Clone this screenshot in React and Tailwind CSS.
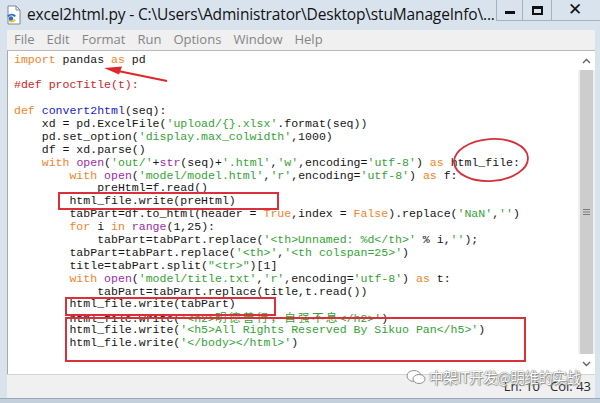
import React from 'react';

const K = 'text-[#f2832a]';
const B = 'text-[#9b2ba8]';
const S = 'text-[#35a335]';
const M = 'text-[#cc2222]';
const D = 'text-[#2020d8]';

const t = (cls, text) => ({ cls, text });

const lines = [
  [t(K, 'import'), ' pandas ', t(K, 'as'), ' pd'],
  [],
  [t(M, '#def procTitle(t):')],
  [],
  [t(K, 'def'), ' ', t(D, 'convert2html'), '(seq):'],
  ['    xd = pd.ExcelFile(', t(S, "'upload/{}.xlsx'"), '.format(seq))'],
  ['    pd.set_option(', t(S, "'display.max_colwidth'"), ',1000)'],
  ['    df = xd.parse()'],
  ['    ', t(K, 'with'), ' ', t(B, 'open'), '(', t(S, "'out/'"), '+', t(B, 'str'), '(seq)+', t(S, "'.html'"), ',', t(S, "'w'"), ',encoding=', t(S, "'utf-8'"), ') ', t(K, 'as'), ' html_file:'],
  ['        ', t(K, 'with'), ' ', t(B, 'open'), '(', t(S, "'model/model.html'"), ',', t(S, "'r'"), ',encoding=', t(S, "'utf-8'"), ') ', t(K, 'as'), ' f:'],
  ['            preHtml=f.read()'],
  ['        html_file.write(preHtml)'],
  ['        tabPart=df.to_html(header = ', t(K, 'True'), ',index = ', t(K, 'False'), ').replace(', t(S, "'NaN'"), ',', t(S, "''"), ')'],
  ['        ', t(K, 'for'), ' i ', t(K, 'in'), ' ', t(B, 'range'), '(1,25):'],
  ['            tabPart=tabPart.replace(', t(S, "'<th>Unnamed: %d</th>'"), ' % i,', t(S, "''"), ');'],
  ['        tabPart=tabPart.replace(', t(S, "'<th>'"), ',', t(S, "'<th colspan=25>'"), ')'],
  ['        title=tabPart.split(', t(S, '"<tr>"'), ')[1]'],
  ['        ', t(K, 'with'), ' ', t(B, 'open'), '(', t(S, "'model/title.txt'"), ',', t(S, "'r'"), ',encoding=', t(S, "'utf-8'"), ') ', t(K, 'as'), ' t:'],
  ['            tabPart=tabPart.replace(title,t.read())'],
  ['        html_file.write(tabPart)'],
  ['        html_file.write(', t(S, "'<h2>"), t(S + ' cjk', '明德善行，自强不息'), t(S, "</h2>'"), ')'],
  ['        html_file.write(', t(S, "'<h5>All Rights Reserved By Sikuo Pan</h5>'"), ')'],
  ['        html_file.write(', t(S, "'</body></html>'"), ')'],
];

function CodeLine({ parts }) {
  return (
    <div className="h-[12.9px] leading-[12.9px] whitespace-pre">
      {parts.length === 0 && ' '}
      {parts.map((p, i) =>
        typeof p === 'string' ? (
          <span key={i}>{p}</span>
        ) : p.cls.includes('cjk') ? (
          <span key={i} className={`${p.cls.replace(' cjk', '')} text-[11.6px] tracking-[2.26px] font-['Noto_Sans_CJK_SC',sans-serif]`}>
            {p.text}
          </span>
        ) : (
          <span key={i} className={p.cls}>{p.text}</span>
        )
      )}
    </div>
  );
}

function FileIcon() {
  return (
    <svg width="18" height="20" viewBox="0 0 18 20">
      <path d="M3 1h8l4 4v14H3z" fill="#fff" stroke="#7a8794" strokeWidth="1" />
      <path d="M11 1v4h4" fill="none" stroke="#7a8794" strokeWidth="1" />
      <path d="M2 11c3-3 7-3 9 0l-2 1c-1-2-4-2-5 0z" fill="#2f6fc0" />
      <path d="M3 16c2 2 6 2 8-1l-2-1c-1 2-3 2-5 1z" fill="#f2c230" />
      <circle cx="6" cy="13.5" r="2.2" fill="#2f6fc0" />
    </svg>
  );
}

export default function App() {
  return (
    <div className="relative w-[600px] h-[403px] overflow-hidden bg-[#d9e3ed] flex flex-col font-['Open_Sans',sans-serif]">
      {/* Title bar */}
      <div className="h-[30px] flex items-start shrink-0">
        <div className="pl-[5px] pt-[5px]">
          <FileIcon />
        </div>
        <div className="ml-[4px] pt-[3px] text-[15.5px] text-[#111] tracking-[-0.15px] whitespace-nowrap">
          excel2html.py - C:\Users\Administrator\Desktop\stuManageInfo\...
        </div>
        <div className="ml-auto flex h-[21px]">
          <div className="w-[27px] border-x border-b border-[#a7b2bd] flex items-center justify-center">
            <div className="w-[10px] h-[3px] bg-[#111] mt-[4px]" />
          </div>
          <div className="w-[29px] border-r border-b border-[#a7b2bd] flex items-center justify-center">
            <div className="w-[11px] h-[9px] border-2 border-t-[3px] border-[#111]" />
          </div>
          <div className="w-[48px] border-b border-[#a7b2bd] flex items-center justify-center text-[17px] font-bold text-[#111] pr-[2px] font-['DejaVu_Sans',sans-serif]">
            ✕
          </div>
        </div>
      </div>

      {/* Window body */}
      <div className="flex-1 flex flex-col pl-[7px] pr-[5px]">
        {/* Menu */}
        <div className="h-[21px] bg-[#f0f0f0] border-b border-[#b9b9b9] flex items-center gap-[12px] pl-[7px] text-[13px] text-[#858585] shrink-0">
          <span>File</span>
          <span>Edit</span>
          <span>Format</span>
          <span>Run</span>
          <span>Options</span>
          <span>Window</span>
          <span>Help</span>
        </div>

        {/* Editor */}
        <div className="flex-1 flex border-l border-[#a9a9a9] bg-white">
          <div className="flex-1 pl-[6px] pt-[2.5px] text-[11.55px] text-[#151515] font-['Liberation_Mono',monospace]">
            {lines.map((l, i) => (
              <CodeLine key={i} parts={l} />
            ))}
          </div>
          <div className="w-[17px] flex flex-col bg-[#f0f0f0]">
            <div className="h-[19px] bg-white flex items-center justify-center">
              <svg width="9" height="6" viewBox="0 0 9 6">
                <path d="M1 5l3.5-3.5L8 5" fill="none" stroke="#606060" strokeWidth="1.3" />
              </svg>
            </div>
            <div className="flex-1 mx-[2px] bg-[#cdcdcd] flex items-center justify-center">
              <svg width="9" height="8" viewBox="0 0 9 8">
                <path d="M1 1.5h7M1 4h7M1 6.5h7" stroke="#7c7c7c" strokeWidth="1" />
              </svg>
            </div>
            <div className="h-[20px] bg-white flex items-center justify-center">
              <svg width="9" height="6" viewBox="0 0 9 6">
                <path d="M1 1l3.5 3.5L8 1" fill="none" stroke="#606060" strokeWidth="1.3" />
              </svg>
            </div>
          </div>
        </div>

        {/* Status bar */}
        <div className="h-[24px] bg-[#f0f0f0] border-t border-[#d4d4d4] flex items-center justify-end pr-[4px] text-[13px] text-[#2a2a2a] shrink-0">
          <span>Ln: 10</span>
          <span className="ml-[10px]">Col: 43</span>
        </div>
      </div>
      <div className="h-[5px] bg-[#c3d0dc] border-t border-[#9aa9b7] shrink-0" />

      {/* Annotations */}
      <svg className="absolute left-0 top-0 pointer-events-none" width="600" height="403" viewBox="0 0 600 403">
        <path d="M167 81 L118 71" stroke="#e0262b" strokeWidth="2.2" fill="none" />
        <path d="M104 68 L122 66.5 L119 74.5 Z" fill="#e0262b" />
        <ellipse cx="491" cy="160" rx="37" ry="21" fill="none" stroke="#d4323a" strokeWidth="1.8" transform="rotate(-4 491 160)" />
        <rect x="59" y="193" width="219" height="16" fill="none" stroke="#d9303a" strokeWidth="2" />
        <rect x="66" y="298" width="209" height="17" fill="none" stroke="#d9303a" strokeWidth="2" />
        <rect x="66" y="318" width="459" height="43" fill="none" stroke="#d9303a" strokeWidth="2" />
      </svg>

      {/* Watermark */}
      <div className="absolute left-[406px] top-[366px] flex items-center gap-[3px] whitespace-nowrap text-white text-[14.5px] tracking-[-0.5px] font-['Noto_Sans_CJK_SC',sans-serif] [text-shadow:0_0_1px_#666,0_0_1px_#666,1px_1px_1px_#888] opacity-90">
        <svg width="20" height="16" viewBox="0 0 20 16">
          <ellipse cx="8" cy="7" rx="7" ry="5.5" fill="#fff" stroke="#888" strokeWidth="1" />
          <ellipse cx="13" cy="10" rx="6" ry="4.5" fill="#fff" stroke="#888" strokeWidth="1" />
        </svg>
        <span>中架IT开发@明维的实战</span>
      </div>
    </div>
  );
}
